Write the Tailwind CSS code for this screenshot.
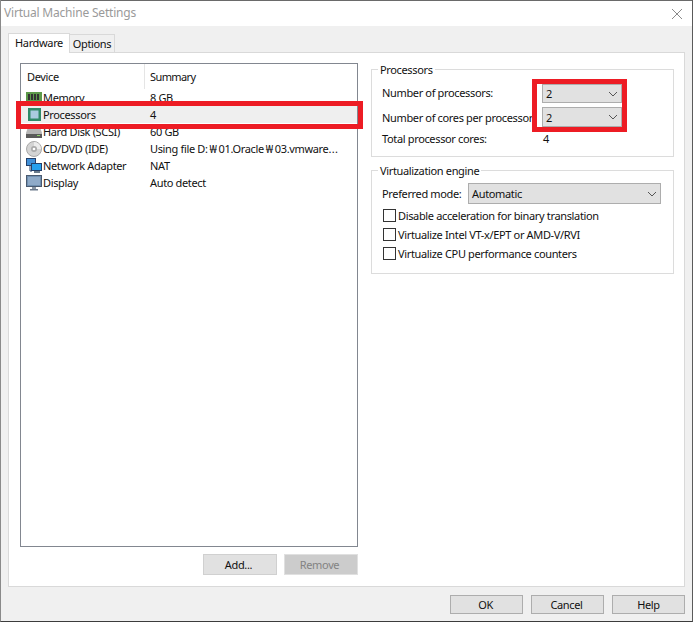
<!DOCTYPE html>
<html>
<head>
<meta charset="utf-8">
<script src="https://cdn.jsdelivr.net/npm/@tailwindcss/browser@4"></script>
</head>
<body class="m-0 bg-white">
<div class="relative w-[693px] h-[622px] flex flex-col overflow-hidden bg-[#f0f0f0] border-l border-r border-b border-l-[#8a8a8a] border-r-[#5a5a5a] border-b-[#3c3c3c] font-['Noto_Sans','Open_Sans',sans-serif] text-[11px] tracking-[-0.35px] text-[#111] leading-[17px]">
  <div class="h-[26px] bg-white flex items-center justify-between pl-[3px] pr-[9px] border-t border-t-[#6a6a6a] shrink-0">
    <span class="text-[12px] tracking-[-0.2px] text-[#9a9a9a] -mt-[2px]">Virtual Machine Settings</span>
    <svg width="12" height="12" viewBox="0 0 12 12"><path d="M1 1 L11 11 M11 1 L1 11" stroke="#8a8a8a" stroke-width="1" fill="none"/></svg>
  </div>
  <div class="flex-1 flex flex-col pl-[7px] pr-[7px]">
    <div class="h-[26px] flex items-end">
      <div class="h-[20px] w-[62px] bg-white border-l border-r border-t border-[#d9d9d9] flex items-center justify-center -mb-px z-10 relative pb-[2px]">Hardware</div>
      <div class="h-[18px] w-[45px] bg-[#f0f0f0] border-r border-t border-[#d9d9d9] flex items-center justify-center">Options</div>
    </div>
    <div class="h-[535px] bg-white border border-[#d9d9d9] flex pl-[11px] pt-[10px]">
      <div class="w-[338px] flex flex-col shrink-0">
        <div class="h-[484px] border border-[#828790] flex flex-col">
          <div class="h-[25px] flex items-center">
            <div class="w-[124px] h-full flex items-center pl-[6px] border-r border-[#e5e5e5]">Device</div>
            <div class="pl-[5px] tracking-[-0.6px]">Summary</div>
          </div>
          <div class="flex flex-col">
            <div class="h-[17px] flex items-center">
              <div class="w-[124px] pl-[5px] flex items-center gap-px">
                <svg width="16" height="14" viewBox="0 0 16 14"><rect x="0" y="1" width="16" height="10" fill="#5d9a4a"/><rect x="2" y="3" width="2" height="6" fill="#333"/><rect x="5" y="3" width="2" height="6" fill="#333"/><rect x="8" y="3" width="2" height="6" fill="#333"/><rect x="11" y="3" width="2" height="6" fill="#333"/></svg>
                <span>Memory</span>
              </div>
              <div class="pl-[5px]">8 GB</div>
            </div>
            <div class="h-[17px] flex items-center bg-[#efefef]">
              <div class="w-[124px] pl-[7px] flex items-center gap-[2px]">
                <svg width="13" height="13" viewBox="0 0 13 13"><rect x="0" y="0" width="13" height="13" fill="#2f8a68"/><rect x="2.5" y="2.5" width="8" height="8" fill="#a9cbe0"/></svg>
                <span>Processors</span>
              </div>
              <div class="pl-[5px]">4</div>
            </div>
            <div class="h-[17px] flex items-center">
              <div class="w-[124px] pl-[5px] flex items-center gap-px">
                <svg width="16" height="14" viewBox="0 0 16 14"><path d="M2 2 H14 L16 8 V13 H0 V8 Z" fill="#b5b5b5"/><rect x="0" y="9" width="16" height="4" fill="#5a5a5a"/><rect x="11" y="10" width="3" height="1" fill="#8ed06a"/></svg>
                <span>Hard Disk (SCSI)</span>
              </div>
              <div class="pl-[5px]">60 GB</div>
            </div>
            <div class="h-[17px] flex items-center">
              <div class="w-[124px] pl-[5px] flex items-center gap-px">
                <svg width="16" height="16" viewBox="0 0 16 16"><circle cx="8" cy="8" r="7.5" fill="#d4d4d4" stroke="#a8a8a8"/><path d="M8 1 A7 7 0 0 1 15 8 L8 8 Z" fill="#ececec"/><circle cx="8" cy="8" r="3" fill="#aaa"/><circle cx="8" cy="8" r="1.3" fill="#fff"/></svg>
                <span>CD/DVD (IDE)</span>
              </div>
              <div class="pl-[5px] whitespace-nowrap">Using file D:<span class="inline-block w-[11px] text-center">₩</span>01.Oracle<span class="inline-block w-[11px] text-center">₩</span>03.vmware<span class="tracking-[0.3px]">...</span></div>
            </div>
            <div class="h-[17px] flex items-center">
              <div class="w-[124px] pl-[5px] flex items-center gap-px">
                <svg width="16" height="16" viewBox="0 0 16 16"><rect x="0.5" y="0.5" width="9" height="7" fill="#3f8fd8" stroke="#24406a"/><path d="M4 8 V13 H6" stroke="#24406a" fill="none"/><rect x="5.5" y="5.5" width="10" height="7" fill="#25a0ee" stroke="#24406a"/><rect x="8" y="13" width="6" height="2" fill="#6a7a8a"/></svg>
                <span>Network Adapter</span>
              </div>
              <div class="pl-[5px]">NAT</div>
            </div>
            <div class="h-[17px] flex items-center">
              <div class="w-[124px] pl-[5px] flex items-center gap-px">
                <svg width="16" height="16" viewBox="0 0 16 16"><rect x="0.5" y="0.5" width="15" height="11" fill="#6f8fb0" stroke="#4a5a70"/><rect x="2" y="2" width="12" height="8" fill="#8faac8"/><rect x="6" y="12" width="4" height="2" fill="#8a96a4"/><rect x="4" y="14" width="8" height="1.5" fill="#6c7a8c"/></svg>
                <span>Display</span>
              </div>
              <div class="pl-[5px]">Auto detect</div>
            </div>
          </div>
        </div>
        <div class="flex justify-end gap-[7px] mt-[7px]">
          <div class="w-[74px] h-[21px] bg-[#e1e1e1] border border-[#d0d0d0] flex items-center justify-center pr-[3px] pb-[1px]">Add...</div>
          <div class="w-[74px] h-[21px] bg-[#cccccc] border border-[#e0e0e0] text-[#838383] flex items-center justify-center pr-[3px] pb-[1px]">Remove</div>
        </div>
      </div>
      <div class="ml-[13px] w-[303px] flex flex-col gap-[13px] pt-[6px]">
        <div class="relative h-[88px] border border-[#dcdcdc] pl-[10px] pt-[14px]">
          <span class="absolute left-[6px] -top-[9px] bg-white px-[2px]">Processors</span>
          <div class="h-[19px] flex items-center"><span class="w-[160px] -mt-[2px]">Number of processors:</span>
            <div class="w-[80px] h-[19px] bg-[#e1e1e1] border border-[#adadad] flex items-center justify-between pl-[3px] pr-[3px]"><span>2</span><svg width="10" height="6" viewBox="0 0 10 6"><path d="M1 1 L5 5 L9 1" stroke="#555" fill="none"/></svg></div>
          </div>
          <div class="h-[20px] mt-[4px] flex items-center"><span class="w-[160px] whitespace-nowrap">Number of cores per processor:</span>
            <div class="w-[80px] h-[20px] bg-[#e1e1e1] border border-[#adadad] flex items-center justify-between pl-[3px] pr-[3px]"><span>2</span><svg width="10" height="6" viewBox="0 0 10 6"><path d="M1 1 L5 5 L9 1" stroke="#555" fill="none"/></svg></div>
          </div>
          <div class="h-[17px] mt-[3px] flex items-center"><span class="w-[160px]">Total processor cores:</span><span class="pl-[1px]">4</span></div>
        </div>
        <div class="relative h-[104px] border border-[#dcdcdc] pl-[10px] pt-[12px]">
          <span class="absolute left-[6px] -top-[9px] bg-white px-[2px]">Virtualization engine</span>
          <div class="h-[21px] flex items-center"><span class="w-[86px] whitespace-nowrap">Preferred mode:</span>
            <div class="w-[193px] h-[21px] bg-[#e1e1e1] border border-[#adadad] flex items-center justify-between pl-[3px] pr-[3px]"><span>Automatic</span><svg width="10" height="6" viewBox="0 0 10 6"><path d="M1 1 L5 5 L9 1" stroke="#555" fill="none"/></svg></div>
          </div>
          <div class="flex flex-col mt-[2px]">
            <label class="h-[19px] flex items-center gap-[2px]"><span class="w-[13px] h-[13px] border border-[#333] bg-white ml-px"></span>Disable acceleration for binary translation</label>
            <label class="h-[19px] flex items-center gap-[2px]"><span class="w-[13px] h-[13px] border border-[#333] bg-white ml-px"></span>Virtualize Intel VT-x/EPT or AMD-V/RVI</label>
            <label class="h-[19px] flex items-center gap-[2px]"><span class="w-[13px] h-[13px] border border-[#333] bg-white ml-px"></span>Virtualize CPU performance counters</label>
          </div>
        </div>
      </div>
    </div>
    <div class="flex justify-end gap-[8px] mt-[8px]">
      <div class="w-[73px] h-[19px] bg-[#e1e1e1] border border-[#adadad] flex items-center justify-center pr-[2px]">OK</div>
      <div class="w-[73px] h-[19px] bg-[#e1e1e1] border border-[#adadad] flex items-center justify-center pr-[2px]">Cancel</div>
      <div class="w-[73px] h-[19px] bg-[#e1e1e1] border border-[#adadad] flex items-center justify-center">Help</div>
    </div>
  </div>
  <div class="absolute left-[15px] top-[101px] w-[347px] h-[28px] border-[5px] border-[#ed1c24]"></div>
  <div class="absolute left-[531px] top-[79px] w-[95px] h-[53px] border-[5px] border-[#ed1c24]"></div>
</div>
</body>
</html>
